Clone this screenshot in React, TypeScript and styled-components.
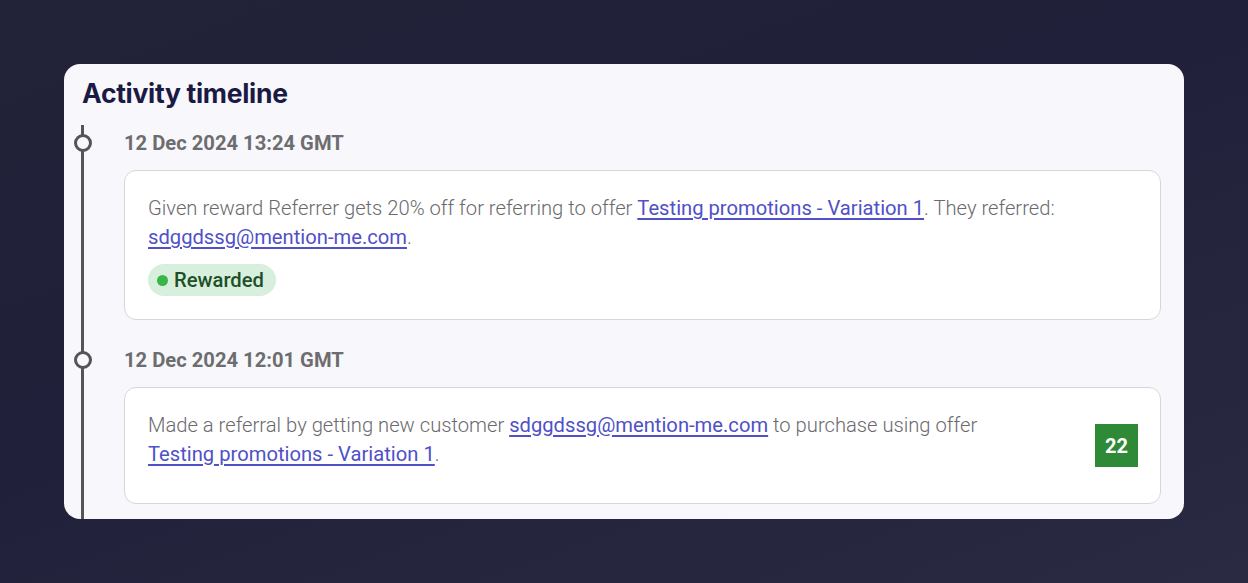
import React from 'react'
import styled, { createGlobalStyle } from 'styled-components'

const GlobalStyle = createGlobalStyle`
  html, body {
    margin: 0;
    padding: 0;
  }
  body {
    width: 1248px;
    height: 583px;
    background: linear-gradient(160deg, #222338 0%, #20203a 45%, #2a2b42 100%);
    font-family: Roboto, "Noto Sans", sans-serif;
  }
`

type Entry = {
  date: string
  content: React.ReactNode
  status?: string
  count?: number
}

const entries: Entry[] = [
  {
    date: '12 Dec 2024 13:24 GMT',
    content: (
      <>
        Given reward Referrer gets 20% off for referring to offer{' '}
        <Link href="#">Testing promotions - Variation 1</Link>. They referred:{' '}
        <Link href="#">sdggdssg@mention-me.com</Link>.
      </>
    ),
    status: 'Rewarded',
  },
  {
    date: '12 Dec 2024 12:01 GMT',
    content: (
      <>
        Made a referral by getting new customer{' '}
        <Link href="#">sdggdssg@mention-me.com</Link> to purchase using offer{' '}
        <Link href="#">Testing promotions - Variation 1</Link>.
      </>
    ),
    count: 22,
  },
]

export default function App() {
  return (
    <>
      <GlobalStyle />
      <Stage>
        <Panel>
          <Title>Activity timeline</Title>
          <Timeline>
            {entries.map((e) => (
              <Item key={e.date}>
                <DateRow>
                  <Dot />
                  {e.date}
                </DateRow>
                <EntryCard>
                  <EntryBody>
                    <Text>{e.content}</Text>
                    {e.status && (
                      <Status>
                        <StatusDot />
                        {e.status}
                      </Status>
                    )}
                  </EntryBody>
                  {e.count !== undefined && <Count>{e.count}</Count>}
                </EntryCard>
              </Item>
            ))}
          </Timeline>
        </Panel>
      </Stage>
    </>
  )
}

const Stage = styled.div`
  padding: 64px 64px 0 64px;
  height: 583px;
  box-sizing: border-box;
`

const Panel = styled.div`
  height: 455px;
  box-sizing: border-box;
  background: #f8f8fc;
  border-radius: 16px;
  overflow: hidden;
  padding: 13px 23px 0 17px;
  display: flex;
  flex-direction: column;
`

const Title = styled.h2`
  margin: 0 0 0 1px;
  font-family: Inter, "Noto Sans", sans-serif;
  font-weight: 700;
  font-size: 26.5px;
  line-height: 33px;
  letter-spacing: -0.3px;
  color: #1b1a44;
`

const Timeline = styled.div`
  margin-top: 15px;
  flex: 1;
  border-left: 3px solid #555558;
  padding-left: 40px;
  display: flex;
  flex-direction: column;
  gap: 22px;
`

const Item = styled.div`
  display: flex;
  flex-direction: column;
`

const DateRow = styled.div`
  position: relative;
  font-weight: 700;
  font-size: 20.2px;
  line-height: 36px;
  color: #6d6d70;
`

const Dot = styled.span`
  position: absolute;
  left: -50px;
  top: 9px;
  width: 12px;
  height: 12px;
  border: 3px solid #555558;
  border-radius: 50%;
  background: #f8f8fc;
`

const EntryCard = styled.div`
  margin-top: 9px;
  background: #fff;
  border: 1.5px solid #d6d6da;
  border-radius: 12px;
  padding: 23px 22px 22.5px 23px;
  display: flex;
  align-items: center;
  gap: 24px;
`

const EntryBody = styled.div`
  flex: 1;
  display: flex;
  flex-direction: column;
  align-items: flex-start;
`

const Text = styled.p`
  margin: 0 0 12px;
  font-weight: 300;
  font-size: 20.2px;
  line-height: 29px;
  color: #6a6a6e;
`

function Link(props: React.AnchorHTMLAttributes<HTMLAnchorElement>) {
  return <LinkText {...props} />
}

const LinkText = styled.a`
  color: #5050c8;
  font-weight: 400;
  white-space: nowrap;
  text-decoration: underline;
  text-underline-offset: 3px;
`

const Status = styled.span`
  display: inline-flex;
  align-items: center;
  gap: 6px;
  height: 32px;
  padding: 0 12px 0 9px;
  border-radius: 16px;
  background: #d8efdd;
  color: #1e4f28;
  font-weight: 500;
  font-size: 20.2px;
`

const StatusDot = styled.span`
  width: 11px;
  height: 11px;
  border-radius: 50%;
  background: #3ab54a;
`

const Count = styled.span`
  width: 43px;
  height: 43px;
  display: flex;
  align-items: center;
  justify-content: center;
  background: #2f8a37;
  color: #fff;
  font-weight: 700;
  font-size: 20px;
`
